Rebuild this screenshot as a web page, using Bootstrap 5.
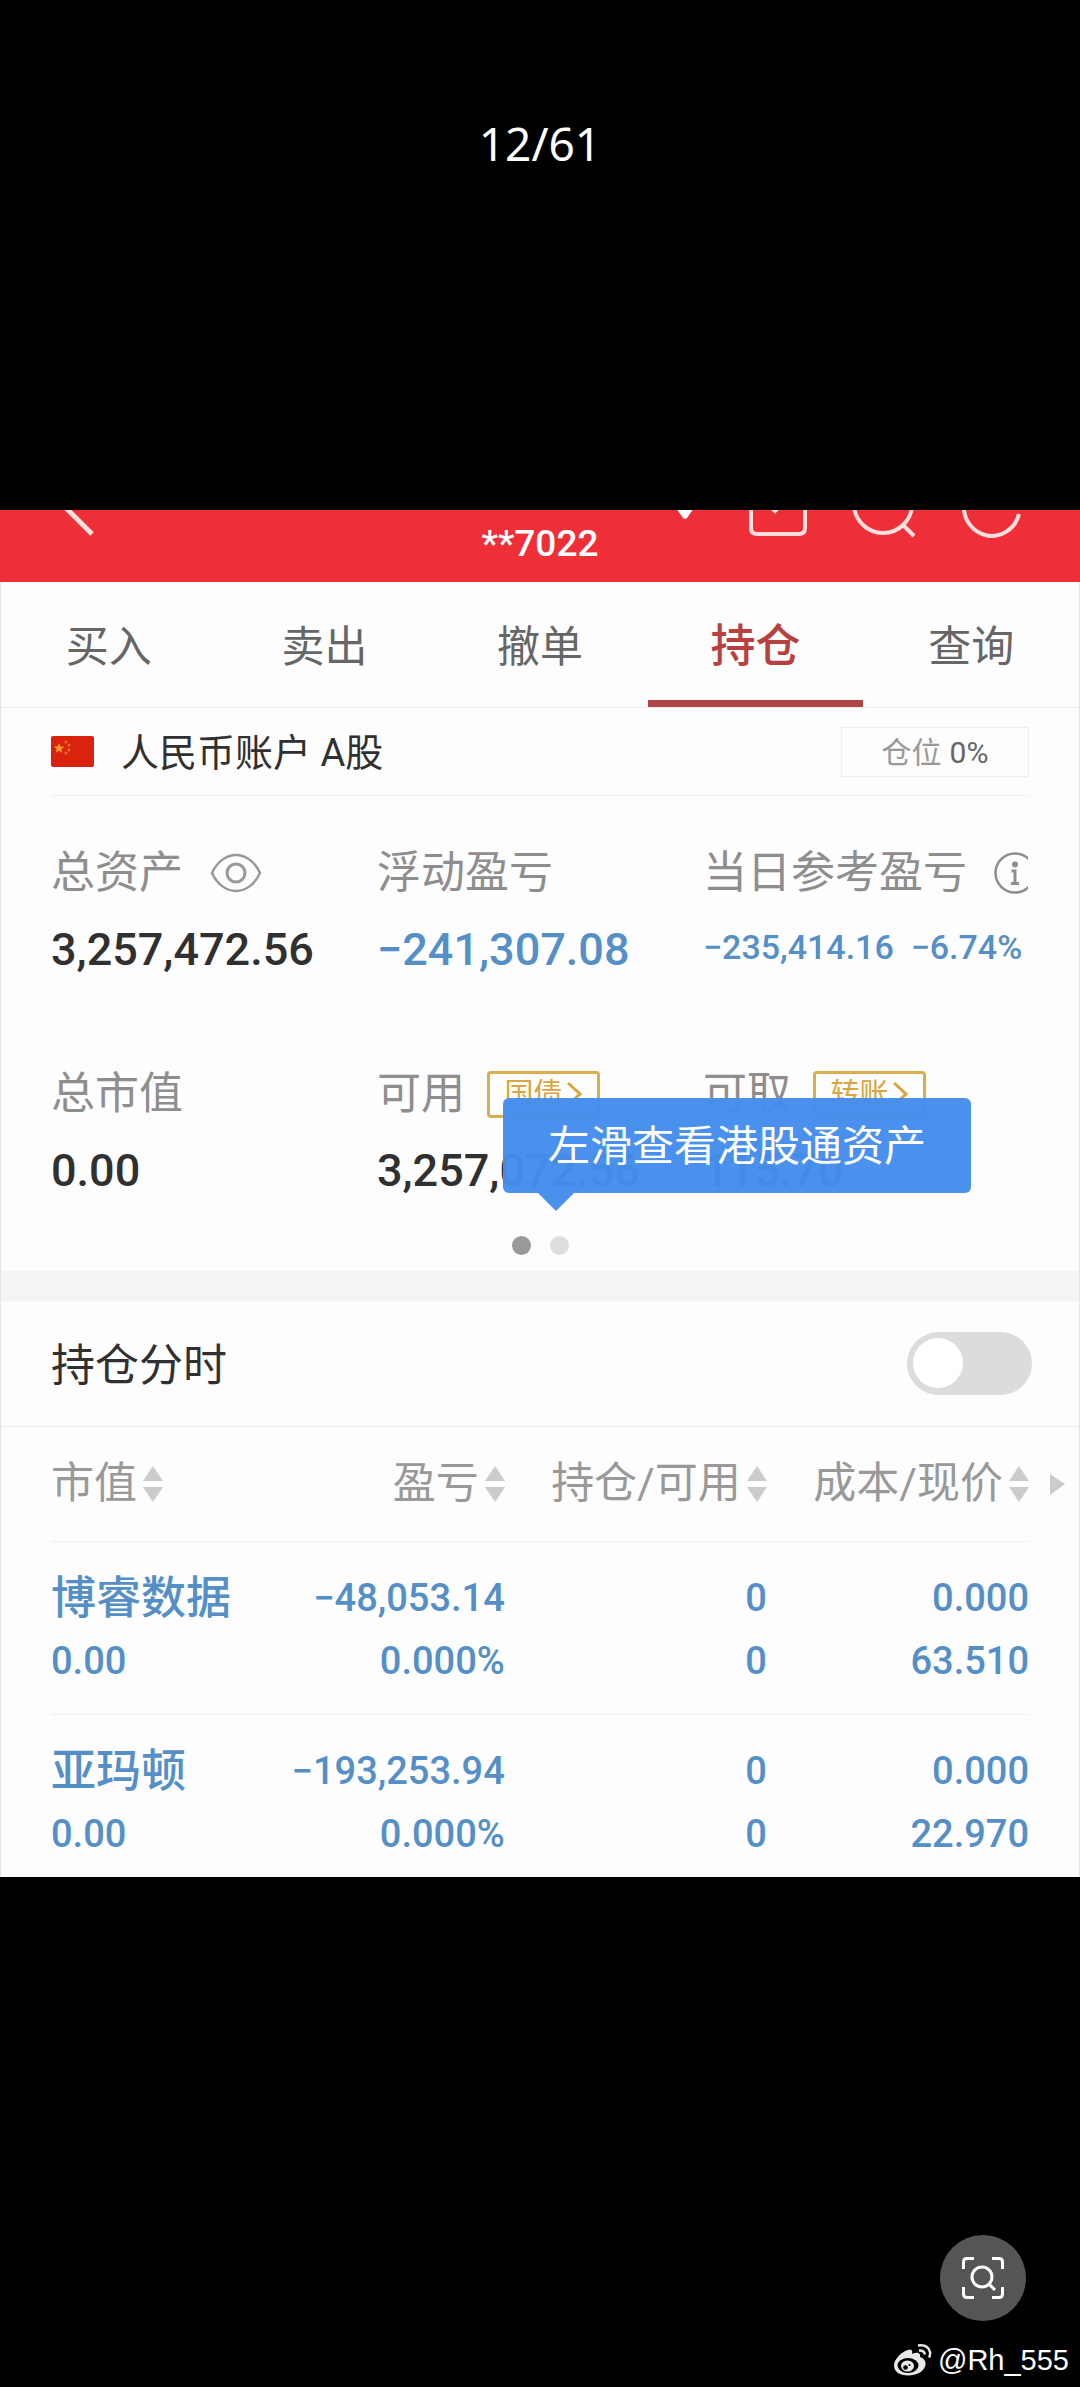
<!DOCTYPE html>
<html lang="zh-CN">
<head>
<meta charset="utf-8">
<meta name="viewport" content="width=device-width, initial-scale=1">
<title>持仓</title>
<link href="https://cdn.jsdelivr.net/npm/bootstrap@5.3.0/dist/css/bootstrap.min.css" rel="stylesheet">
<style>
body{background:#000;font-family:Roboto,"Noto Sans CJK SC",sans-serif;color:#303030;line-height:1.2}
svg{display:block;flex-shrink:0}
button{font-family:inherit;color:inherit}
.viewer-top{height:510px;padding-top:115px;font:46px/56px "Noto Sans",sans-serif}
.sheet{background:#fdfdfd;border-left:1px solid #e4e4e4;border-right:1px solid #e4e4e4}
.app-head{background:#ef2f38;height:72px;color:#fff;margin:0 -1px;grid-template-columns:1fr auto 1fr}
.app-head button{display:block;background:none;border:0;padding:0}
.head-back{padding-left:62px}
.head-icons{padding:0 58px 0 77px}
.acct{font-size:37px;line-height:42px;padding-top:13px;font-weight:500}
.trade-tabs{height:126px;border-bottom:1px solid #ececec}
.trade-tabs a{color:#666;font-size:43px;line-height:130px;height:125px;text-decoration:none}
.trade-tabs a.on{color:#b8403f;font-size:45px;font-weight:500;box-shadow:inset 0 -7px #b04648}
.side{margin-left:50px;margin-right:50px}
.acct-row{height:88px;border-bottom:1px solid #f0f0f0;font-size:38px}
.acct-name{margin-left:27px;padding-top:4px}
.pos-ratio{border:1px solid #eee;width:188px;height:50px;font-size:30px;color:#999;padding-top:2px}
.pos-ratio b{color:#666;font-weight:400}
.sums{padding-top:39px;row-gap:69px}
.lbl{height:76px;font-size:44px;color:#8e8e8e;white-space:nowrap;gap:27px}
.lbl-act{gap:22px}
.amt{height:76px;line-height:78px;font-size:45px;font-weight:500;white-space:nowrap}
.amt-sm{font-size:34px;line-height:72px}
.blue{color:#548fc8}
.gold{border:3px solid #d9ae4c;border-radius:4px;background:none;color:#d9a63c;width:113px;height:47px;font-size:29px;padding:0}
.tip{left:502px;top:390px;width:468px;height:95px;padding-top:4px;border-radius:6px;background:#448eec;opacity:.97;color:#fff;font-size:42px}
.tip svg{left:35px;top:95px}
.dots{margin-top:28px;padding-bottom:16px;gap:19px}
.dots i{width:19px;height:19px;border-radius:50%;background:#dedede}
.dots i:first-child{background:#999}
.band{height:30px;background:#f4f4f4}
.time-row{height:126px;border-bottom:1px solid #ececec;font-size:44px;padding:0 47px 0 50px}
.time-row label{padding-top:5px}
.form-switch .form-check-input.sw{width:125px;height:63px;margin:0;border:0;background-color:#dcdcdc;background-size:63px 63px;--bs-form-switch-bg:url("data:image/svg+xml,%3csvg xmlns='http://www.w3.org/2000/svg' viewBox='0 0 63 63'%3e%3ccircle cx='31' cy='31' r='25' fill='%23fff'/%3e%3c/svg%3e");background-image:var(--bs-form-switch-bg);background-position:left center}
.pos{table-layout:fixed;width:calc(100% - 100px)}
.pos th,.pos td{padding:0;border-bottom:1px solid #f0f0f0;text-align:right;white-space:nowrap}
.pos th:first-child,.pos td:first-child{text-align:left}
.pos th{height:114px;font-weight:400;font-size:43px;color:#999}
.pos th button{background:none;border:0;padding:0;display:inline-flex;align-items:center;gap:6px}
.pos td{font-size:38px;font-weight:500;color:#548fc8;padding:25px 0 21px}
.pos td span{display:block;height:63px;line-height:63px}
.pos td .nm{font-size:45px}
.pos tr:last-child td{border:0;padding-bottom:11px}
.more{right:-36px;top:47px}
.scan{width:86px;height:86px;background:#555;border:0;padding:0;margin-right:54px}
.mark-by{font:29px/34px "Liberation Sans",sans-serif;color:#fff;margin:22px 11px 10px 0;gap:6px}
</style>
</head>
<body class="d-flex flex-column min-vh-100">
<div class="viewer-top text-white text-center">12/61</div>

<main class="sheet">
  <header class="app-head d-grid align-items-start overflow-hidden">
    <div class="head-back">
      <button aria-label="返回"><svg width="34" height="26" fill="none" stroke="#ffdede" stroke-width="5"><path d="M4-2 30 24"/></svg></button>
    </div>
    <div class="acct">**7022</div>
    <div class="head-icons d-flex justify-content-between">
      <button class="me-2" aria-label="切换账户"><svg width="20" height="30"><path d="M1-2H19L12 8q-2 2-4 0Z" fill="#fff"/></svg></button>
      <button aria-label="收件"><svg width="58" height="30" fill="none" stroke="#ffdede" stroke-width="4"><path d="M2-4V18q0 6 6 6H50q6 0 6-6V-4M20-5l6 6 6-6"/></svg></button>
      <button aria-label="搜索"><svg width="64" height="30" fill="none" stroke="#ffdede" stroke-width="4"><circle cx="31" cy="-6" r="29"/><path d="M50 14 62 26"/></svg></button>
      <button aria-label="刷新"><svg width="60" height="30" fill="none" stroke="#ffdede" stroke-width="4"><path d="M2-6A28 29 0 0 0 57 4"/></svg></button>
    </div>
  </header>

  <nav class="trade-tabs d-flex text-center" aria-label="交易">
    <a class="col" href="#">买入</a><a class="col" href="#">卖出</a><a class="col" href="#">撤单</a><a class="col on" href="#" aria-current="page">持仓</a><a class="col" href="#">查询</a>
  </nav>

  <section class="position-relative">
    <div class="acct-row side d-flex align-items-center">
      <svg width="43" height="31"><rect width="43" height="31" rx="2" fill="#d9230f"/><path d="m8 7 1.500 3.500 3.800.2-3 2.400 1 3.700L8 14.800l-3.300 2 1-3.700-3-2.400 3.800-.2Z" fill="#fb9a25"/><g fill="#ee6b22"><circle cx="15" cy="6" r="1.500"/><circle cx="18" cy="9" r="1.500"/><circle cx="18" cy="14" r="1.500"/><circle cx="15" cy="17" r="1.500"/></g></svg>
      <span class="acct-name">人民币账户 A股</span>
      <span class="pos-ratio ms-auto d-flex align-items-center justify-content-center gap-2">仓位 <b>0%</b></span>
    </div>

    <div class="sums side row gx-0">
      <div class="col-4">
        <div class="lbl d-flex align-items-center">总资产
          <svg width="52" height="40" fill="none" stroke="#999" stroke-width="2.500"><path d="M2 20C7 9 16 2 26 2s19 7 24 18C45 31 36 38 26 38S7 31 2 20Z"/><circle cx="26" cy="20" r="9" stroke-width="3"/></svg></div>
        <div class="amt">3,257,472.56</div>
      </div>
      <div class="col-4">
        <div class="lbl d-flex align-items-center">浮动盈亏</div>
        <div class="amt blue">−241,307.08</div>
      </div>
      <div class="col-4">
        <div class="lbl d-flex align-items-center">当日参考盈亏
          <svg width="34" height="42" fill="none" stroke="#8e8e8e" stroke-width="2.500"><circle cx="21" cy="21" r="19.500"/><circle cx="21" cy="12.500" r="3" fill="#8e8e8e" stroke="none"/><path d="M17.500 19H21V31M17 31.500h8" stroke-width="3"/></svg></div>
        <div class="amt amt-sm blue">−235,414.16&nbsp; −6.74%</div>
      </div>
      <div class="col-4">
        <div class="lbl d-flex align-items-center">总市值</div>
        <div class="amt">0.00</div>
      </div>
      <div class="col-4">
        <div class="lbl lbl-act d-flex align-items-center">可用
          <button class="gold d-flex align-items-center justify-content-center">国债<svg class="ms-1" width="16" height="26" fill="none" stroke="#d9a63c" stroke-width="3"><path d="m2 2 12 11L2 24"/></svg></button></div>
        <div class="amt">3,257,072.56</div>
      </div>
      <div class="col-4">
        <div class="lbl lbl-act d-flex align-items-center">可取
          <button class="gold d-flex align-items-center justify-content-center">转账<svg class="ms-1" width="16" height="26" fill="none" stroke="#d9a63c" stroke-width="3"><path d="m2 2 12 11L2 24"/></svg></button></div>
        <div class="amt">115.70</div>
      </div>
    </div>
    <div class="dots d-flex justify-content-center"><i></i><i></i></div>
    <div class="tip position-absolute d-flex align-items-center justify-content-center">左滑查看港股通资产
      <svg class="position-absolute" width="36" height="19"><path d="M0 0H36L18 18Z" fill="#448eec"/></svg></div>
  </section>

  <div class="band"></div>

  <div class="time-row form-switch d-flex align-items-center justify-content-between">
    <label for="sw">持仓分时</label>
    <input class="form-check-input sw" type="checkbox" role="switch" id="sw">
  </div>

  <table class="pos side">
    <colgroup><col style="width:19.600%"><col style="width:26.800%"><col style="width:26.800%"><col style="width:26.800%"></colgroup>
    <thead>
      <tr>
        <th scope="col"><button>市值<svg width="20" height="36" fill="#ccc"><path d="M0 15 10 0 20 15ZM0 21H20L10 36Z"/></svg></button></th>
        <th scope="col"><button>盈亏<svg width="20" height="36" fill="#ccc"><path d="M0 15 10 0 20 15ZM0 21H20L10 36Z"/></svg></button></th>
        <th scope="col"><button>持仓/可用<svg width="20" height="36" fill="#ccc"><path d="M0 15 10 0 20 15ZM0 21H20L10 36Z"/></svg></button></th>
        <th scope="col" class="position-relative"><button>成本/现价<svg width="20" height="36" fill="#ccc"><path d="M0 15 10 0 20 15ZM0 21H20L10 36Z"/></svg></button>
          <svg class="more position-absolute" width="15" height="21" fill="#ccc"><path d="M0 0 15 10 0 21Z"/></svg></th>
      </tr>
    </thead>
    <tbody>
      <tr><td><span class="nm">博睿数据</span><span>0.00</span></td><td><span>−48,053.14</span><span>0.000%</span></td><td><span>0</span><span>0</span></td><td><span>0.000</span><span>63.510</span></td></tr>
      <tr><td><span class="nm">亚玛顿</span><span>0.00</span></td><td><span>−193,253.94</span><span>0.000%</span></td><td><span>0</span><span>0</span></td><td><span>0.000</span><span>22.970</span></td></tr>
    </tbody>
  </table>
</main>

<footer class="flex-grow-1 d-flex flex-column justify-content-end align-items-end">
  <button class="scan rounded-circle d-flex align-items-center justify-content-center" aria-label="识图">
    <svg width="42" height="42" fill="none" stroke="#fff" stroke-width="3"><path d="M1.500 12V5q0-3.500 3.500-3.500h7M30 1.500h7q3.500 0 3.500 3.500v7M40.500 30v7q0 3.500-3.500 3.500h-7M12 40.500H5Q1.500 40.500 1.500 37v-7"/><circle cx="20" cy="20" r="10"/><path d="m27 27 6 6"/></svg>
  </button>
  <div class="mark-by d-flex align-items-center">
    <svg width="38" height="32" viewBox="0 0 38 32"><path fill="#e8e8e8" d="M14 6c3-1.500 5 0 4 4 4-2 9-2 8 3 4 1.500 6 3.500 5.500 8C30 28 22 31.500 14 31.500S0 28 0 21.500C0 15 8 7.500 14 6Z"/><ellipse cx="14" cy="21.500" rx="10.500" ry="7.500" fill="#000"/><ellipse cx="13.500" cy="22" rx="6.500" ry="5.500" fill="#e8e8e8"/><circle cx="11.500" cy="23.500" r="2.300" fill="#000"/><circle cx="15.500" cy="21" r="1" fill="#000"/><path d="M24 1.500Q34 0 36 8q.5 3-1 5.500M25 6.500q5-.5 6 4" fill="none" stroke="#e8e8e8" stroke-width="2.500"/></svg>
    <span>@Rh_555</span>
  </div>
</footer>
<script src="https://cdn.jsdelivr.net/npm/bootstrap@5.3.0/dist/js/bootstrap.bundle.min.js"></script>
</body>
</html>
